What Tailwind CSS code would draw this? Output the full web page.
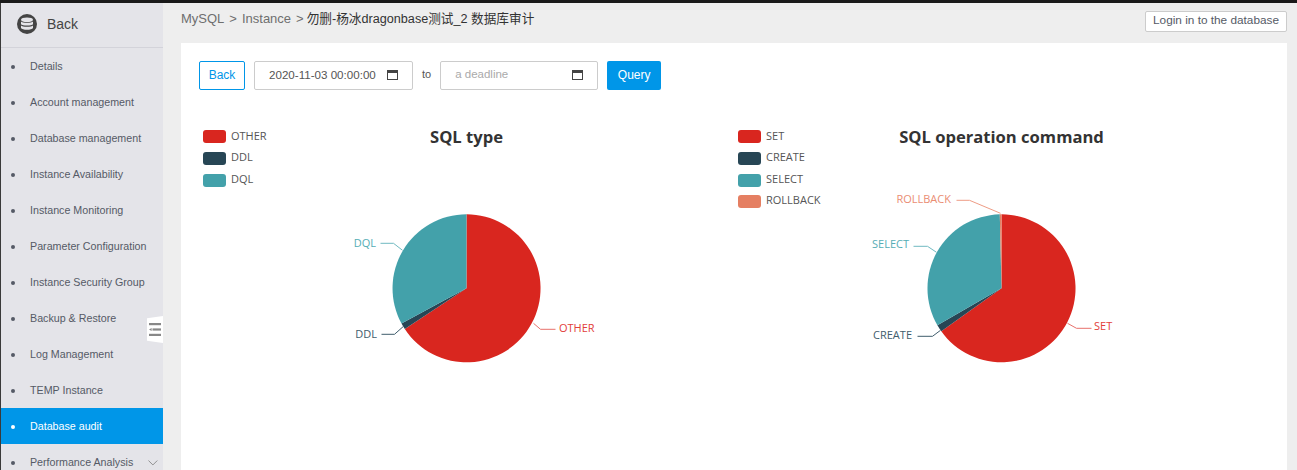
<!DOCTYPE html>
<html lang="en">
<head>
    <meta charset="UTF-8">
    <title>Database audit</title>
    <script src="https://cdn.jsdelivr.net/npm/@tailwindcss/browser@4"></script>
</head>
<body class="h-screen overflow-hidden bg-[#eeeeee] font-['Liberation_Sans','Noto_Sans_CJK_SC',sans-serif]">
    <div class="h-[3px] bg-[#1a1a1a]"></div>
    <div class="flex h-[467px] overflow-hidden">
        <!-- Sidebar -->
        <aside class="relative w-[163px] shrink-0 overflow-hidden border-l border-[#3a3a3a] bg-[#e4e4e9] text-[10.7px] whitespace-nowrap text-[#555a66]">
            <div class="flex h-[45px] items-center gap-[10px] border-b border-[#d3d3da] pb-[2px] pl-4 text-sm text-[#444]">
                <svg class="h-5 w-5" viewBox="0 0 20 20">
                    <circle cx="10" cy="10" r="10" fill="#444"/>
                    <ellipse cx="10" cy="5.8" rx="6" ry="2.4" fill="#e4e4e9"/>
                    <path d="M4 7.6c1 1.7 11 1.7 12 0v2.6c-1 1.7-11 1.7-12 0zM4 11.4c1 1.7 11 1.7 12 0v2.6c-1 2.4-11 2.4-12 0z" fill="#e4e4e9"/>
                </svg>
                <span>Back</span>
            </div>
            <nav>
                <a class="flex h-9 items-center gap-[15px] pl-[10px] pt-px"><i class="h-1 w-1 rounded-full bg-[#555a66]"></i>Details</a>
                <a class="flex h-9 items-center gap-[15px] pl-[10px] pt-px"><i class="h-1 w-1 rounded-full bg-[#555a66]"></i>Account management</a>
                <a class="flex h-9 items-center gap-[15px] pl-[10px] pt-px"><i class="h-1 w-1 rounded-full bg-[#555a66]"></i>Database management</a>
                <a class="flex h-9 items-center gap-[15px] pl-[10px] pt-px"><i class="h-1 w-1 rounded-full bg-[#555a66]"></i>Instance Availability</a>
                <a class="flex h-9 items-center gap-[15px] pl-[10px] pt-px"><i class="h-1 w-1 rounded-full bg-[#555a66]"></i>Instance Monitoring</a>
                <a class="flex h-9 items-center gap-[15px] pl-[10px] pt-px"><i class="h-1 w-1 rounded-full bg-[#555a66]"></i>Parameter Configuration</a>
                <a class="flex h-9 items-center gap-[15px] pl-[10px] pt-px"><i class="h-1 w-1 rounded-full bg-[#555a66]"></i>Instance Security Group</a>
                <a class="flex h-9 items-center gap-[15px] pl-[10px] pt-px"><i class="h-1 w-1 rounded-full bg-[#555a66]"></i>Backup &amp; Restore</a>
                <a class="flex h-9 items-center gap-[15px] pl-[10px] pt-px"><i class="h-1 w-1 rounded-full bg-[#555a66]"></i>Log Management</a>
                <a class="flex h-9 items-center gap-[15px] pl-[10px] pt-px"><i class="h-1 w-1 rounded-full bg-[#555a66]"></i>TEMP Instance</a>
                <a class="flex h-9 items-center gap-[15px] bg-[#0096e8] pl-[10px] pt-px text-white"><i class="h-1 w-1 rounded-full bg-white"></i>Database audit</a>
                <a class="flex h-9 items-center gap-[15px] pl-[10px] pt-px"><i class="h-1 w-1 rounded-full bg-[#555a66]"></i>Performance Analysis
                    <svg class="ml-auto mr-[5px] h-[6px] w-[10px]" viewBox="0 0 10 6" fill="none" stroke="#777" stroke-width="0.8"><path d="M0.5 0.5 5 5 9.5 0.5"/></svg>
                </a>
            </nav>
            <!-- Collapse handle -->
            <div class="absolute right-0 top-[313px] flex h-[27px] w-4 items-center justify-center bg-white [clip-path:polygon(0_8%,100%_0,100%_100%,0_92%)]">
                <svg class="h-[13px] w-[12px]" viewBox="0 0 12 13" fill="#888">
                    <rect width="12" height="2.2"/>
                    <rect x="3.5" y="5.4" width="8.5" height="2.2"/>
                    <rect y="10.8" width="12" height="2.2"/>
                    <path d="M0 6.5 2.6 5v3z"/>
                </svg>
            </div>
        </aside>

        <!-- Main -->
        <main class="min-w-0 flex-1 pl-[18px] pr-[10px]">
            <div class="flex h-10 items-start justify-between">
                <div class="flex h-[32px] items-center text-[13px] text-[#6f6f6f]">
                    <span>MySQL</span>
                    <span class="mx-[5px]">&gt;</span>
                    <span>Instance</span>
                    <span class="mx-[5px] mr-[3px]">&gt;</span>
                    <span class="text-[12.65px] text-[#333]">勿删-杨冰dragonbase测试_2 数据库审计</span>
                </div>
                <button class="mt-2 h-[21px] w-[142px] rounded-[2px] border border-[#cccccc] bg-white pb-px text-center text-[11.8px] text-[#555a66]">Login in to the database</button>
            </div>

            <div class="h-[427px] bg-white px-[18px] pt-[18px]">
                <!-- Toolbar -->
                <div class="flex h-[29px] items-center text-xs">
                    <button class="h-full w-[46px] rounded-[2px] border border-[#0096e8] pb-px text-center text-[#0096e8]">Back</button>
                    <div class="ml-[9px] flex h-full w-[159px] items-center justify-between rounded-[2px] border border-[#cccccc] pb-px pl-[14px] pr-[14px] text-[11.6px] text-[#555]">
                        <span>2020-11-03 00:00:00</span>
                        <svg class="h-[10px] w-[11px]" viewBox="0 0 11 10"><rect x="0.5" y="0.5" width="10" height="9" fill="none" stroke="#444"/><rect width="11" height="3" fill="#444"/></svg>
                    </div>
                    <span class="mx-[9px] -mt-[2px] text-[11px] text-[#555]">to</span>
                    <div class="flex h-full w-[158px] items-center justify-between rounded-[2px] border border-[#cccccc] pb-px pl-[14px] pr-[14px] text-[11.5px] text-[#aaaaaa]">
                        <span>a deadline</span>
                        <svg class="h-[10px] w-[11px]" viewBox="0 0 11 10"><rect x="0.5" y="0.5" width="10" height="9" fill="none" stroke="#444"/><rect width="11" height="3" fill="#444"/></svg>
                    </div>
                    <button class="ml-[9px] h-full w-[54px] rounded-[2px] bg-[#0096e8] pb-px text-center text-white">Query</button>
                </div>

                <!-- Charts -->
                <div class="mt-5 grid w-[1070px] grid-cols-2 font-['Open_Sans',sans-serif]">
                    <svg class="h-[360px] w-[535px]" viewBox="0 0 535 360">
                        <rect x="4" y="20" width="23" height="13" rx="3" fill="#d9261f"/>
                        <rect x="4" y="42" width="23" height="13" rx="3" fill="#274655"/>
                        <rect x="4" y="64" width="23" height="13" rx="3" fill="#43a1aa"/>
                        <text x="32" y="27" dominant-baseline="middle" class="fill-[#555] text-[11px]">OTHER</text>
                        <text x="32" y="48" dominant-baseline="middle" class="fill-[#555] text-[11px]">DDL</text>
                        <text x="32" y="70" dominant-baseline="middle" class="fill-[#555] text-[11px]">DQL</text>
                        <text x="267.5" y="29" text-anchor="middle" dominant-baseline="middle" class="fill-[#333] text-[16.6px] font-bold">SQL type</text>

                        <g transform="translate(0.5 0.3)">
                            <path d="M267 178 L267 104 A74 74 0 1 1 205.3 218.8 Z" fill="#d9261f"/>
                            <path d="M267 178 L205.3 218.8 A74 74 0 0 1 202 213.3 Z" fill="#274655"/>
                            <path d="M267 178 L202 213.3 A74 74 0 0 1 267 104 Z" fill="#43a1aa"/>
                            <path d="M334 213 341 219H356" fill="none" stroke="#e8716c"/>
                            <path d="M204 216 195 224H182" fill="none" stroke="#3f5d6c"/>
                            <path d="M203 140 194 133H181" fill="none" stroke="#70bac1"/>
                        </g>
                        <text x="360" y="219" dominant-baseline="middle" class="fill-[#e2403a] text-[11px]">OTHER</text>
                        <text x="178" y="225" text-anchor="end" dominant-baseline="middle" class="fill-[#3f5d6c] text-[11px]">DDL</text>
                        <text x="177" y="134" text-anchor="end" dominant-baseline="middle" class="fill-[#55adb5] text-[11px]">DQL</text>
                    </svg>
                    <svg class="h-[360px] w-[535px]" viewBox="0 0 535 360">
                        <rect x="4" y="20" width="23" height="13" rx="3" fill="#d9261f"/>
                        <rect x="4" y="42" width="23" height="13" rx="3" fill="#274655"/>
                        <rect x="4" y="64" width="23" height="13" rx="3" fill="#43a1aa"/>
                        <rect x="4" y="85" width="23" height="13" rx="3" fill="#e57f62"/>
                        <text x="32" y="27" dominant-baseline="middle" class="fill-[#555] text-[11px]">SET</text>
                        <text x="32" y="48" dominant-baseline="middle" class="fill-[#555] text-[11px]">CREATE</text>
                        <text x="32" y="70" dominant-baseline="middle" class="fill-[#555] text-[11px]">SELECT</text>
                        <text x="32" y="91" dominant-baseline="middle" class="fill-[#555] text-[11px]">ROLLBACK</text>
                        <text x="267.5" y="29" text-anchor="middle" dominant-baseline="middle" class="fill-[#333] text-[16.6px] font-bold">SQL operation command</text>

                        <g transform="translate(0.5 0.3)">
                            <path d="M267 178 L267 104 A74 74 0 1 1 206.8 221 Z" fill="#d9261f"/>
                            <path d="M267 178 L206.8 221 A74 74 0 0 1 202.9 215 Z" fill="#274655"/>
                            <path d="M267 178 L202.9 215 A74 74 0 0 1 265.3 104 Z" fill="#43a1aa"/>
                            <path d="M267 178 L265.3 104 A74 74 0 0 1 267 104 Z" fill="#e57f62"/>
                            <path d="M333 213 342 218H357" fill="none" stroke="#e8716c"/>
                            <path d="M206 220 198 226H183" fill="none" stroke="#3f5d6c"/>
                            <path d="M202 142 193 136H179" fill="none" stroke="#70bac1"/>
                            <path d="M266 103 235 90H222" fill="none" stroke="#ee9c85"/>
                        </g>
                        <text x="360" y="217" dominant-baseline="middle" class="fill-[#e2403a] text-[11px]">SET</text>
                        <text x="178" y="226" text-anchor="end" dominant-baseline="middle" class="fill-[#3f5d6c] text-[11px]">CREATE</text>
                        <text x="175" y="135" text-anchor="end" dominant-baseline="middle" class="fill-[#55adb5] text-[11px]">SELECT</text>
                        <text x="217" y="90" text-anchor="end" dominant-baseline="middle" class="fill-[#ea8d73] text-[11px]">ROLLBACK</text>
                    </svg>
                </div>
            </div>
        </main>
    </div>
</body>
</html>
